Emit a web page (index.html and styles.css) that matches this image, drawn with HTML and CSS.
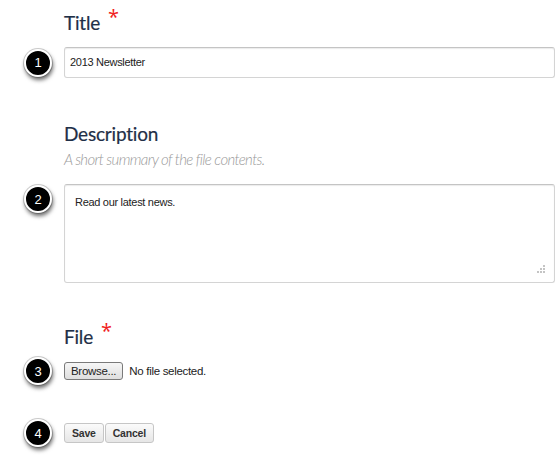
FILE: index.html
```html
<!DOCTYPE html>
<html>
<head>
<meta charset="utf-8">
<link rel="stylesheet" href="styles.css">
</head>
<body>
<form class="form">
  <div class="row head-row title-head">
    <div class="gutter"></div>
    <h2 class="label">Title<span class="req">*</span></h2>
  </div>
  <div class="row input-row">
    <div class="gutter"><span class="step">1</span></div>
    <div class="text-input">2013 Newsletter</div>
  </div>

  <div class="row head-row desc-head">
    <div class="gutter"></div>
    <div>
      <h2 class="label">Description</h2>
      <p class="hint">A short summary of the file contents.</p>
    </div>
  </div>
  <div class="row area-row">
    <div class="gutter"><span class="step">2</span></div>
    <div class="text-area">Read our latest news.
      <svg class="grip" width="8" height="8" viewBox="0 0 8 8"><g fill="#c4c4c4"><rect x="6" y="0" width="2" height="2"/><rect x="3" y="3" width="2" height="2"/><rect x="6" y="3" width="2" height="2"/><rect x="0" y="6" width="2" height="2"/><rect x="3" y="6" width="2" height="2"/><rect x="6" y="6" width="2" height="2"/></g></svg>
    </div>
  </div>

  <div class="row head-row file-head">
    <div class="gutter"></div>
    <h2 class="label">File<span class="req">*</span></h2>
  </div>
  <div class="row file-row">
    <div class="gutter"><span class="step">3</span></div>
    <div class="file-field"><span class="btn browse">Browse...</span><span class="nofile">No file selected.</span></div>
  </div>

  <div class="row actions-row">
    <div class="gutter"><span class="step">4</span></div>
    <div class="actions"><span class="btn bold">Save</span><span class="btn bold">Cancel</span></div>
  </div>
</form>
</body>
</html>
```
FILE: styles.css
```css
html, body { margin: 0; padding: 0; background: #fff; }
body { width: 560px; height: 457px; overflow: hidden; font-family: "Liberation Sans", Arial, sans-serif; }
.form { display: flex; flex-direction: column; padding-right: 5px; }
.row { display: grid; grid-template-columns: 64px 1fr; align-items: center; }
.gutter { display: flex; justify-content: center; padding-left: 12px; box-sizing: border-box; }
.step {
  width: 24px; height: 24px; border-radius: 50%;
  background: #000; color: #fff; border: 2px solid #fff;
  box-shadow: 1px 3px 4px rgba(0,0,0,0.6), 0 0 0 1px #d0d0d0;
  display: flex; align-items: center; justify-content: center;
  font: 13px/1 "Liberation Sans", Arial, sans-serif;
}
.label {
  margin: 0; font-family: Lato, "Open Sans", sans-serif; font-weight: 400;
  font-size: 19px; line-height: 24px; color: #1f2f47; letter-spacing: -0.2px;
  -webkit-text-stroke: 0.2px #1f2f47;
}
.req { color: #f02020; font-family: "Open Sans", sans-serif; font-size: 20px; margin-left: 8px; position: relative; top: -6px; -webkit-text-stroke: 0; }
.title-head { margin-top: 11px; }
.input-row { margin-top: 12px; }
.text-input {
  height: 29px; border: 1px solid #d4d4d4; border-top-color: #c4c4c4; border-radius: 3px;
  box-shadow: inset 0 1px 1px rgba(0,0,0,0.08);
  font-size: 11px; letter-spacing: -0.3px; color: #222; padding-left: 5px; line-height: 29px;
}
.desc-head { margin-top: 44px; }
.hint {
  margin: 4px 0 0; font-family: Lato, "Open Sans", sans-serif; font-style: italic; font-weight: 300;
  font-size: 15px; line-height: 18px; color: #9a9a9a; letter-spacing: -0.65px;
}
.area-row { margin-top: 16px; align-items: start; }
.area-row .gutter { padding-top: 1px; }
.text-area {
  position: relative; height: 86px; border: 1px solid #d4d4d4; border-top-color: #c4c4c4; border-radius: 3px;
  box-shadow: inset 0 1px 1px rgba(0,0,0,0.08);
  font-size: 11px; letter-spacing: -0.3px; color: #222; padding: 11px 0 0 10px;
}
.grip { position: absolute; right: 9px; bottom: 9px; }
.file-head { margin-top: 42px; }
.file-row { margin-top: 8px; }
.file-field { display: flex; align-items: center; gap: 6px; }
.btn {
  display: inline-flex; align-items: center; justify-content: center;
  height: 17px; padding: 0 6px; border: 1px solid #8f8f8f; border-radius: 3px;
  background: linear-gradient(#f6f6f6, #dedede); font-size: 11.5px; letter-spacing: -0.3px; color: #222;
}
.browse { height: 16px; border-color: #7a7a7a; }
.nofile { font-size: 11.5px; letter-spacing: -0.3px; color: #222; }
.actions-row { margin-top: 34px; }
.actions { display: flex; gap: 1px; }
.bold { font-weight: bold; font-size: 10.5px; letter-spacing: -0.2px; color: #333; height: 18px; border-color: #c6c6c6; background: linear-gradient(#fbfbfb, #e6e6e6); padding: 0 7px; }
```
